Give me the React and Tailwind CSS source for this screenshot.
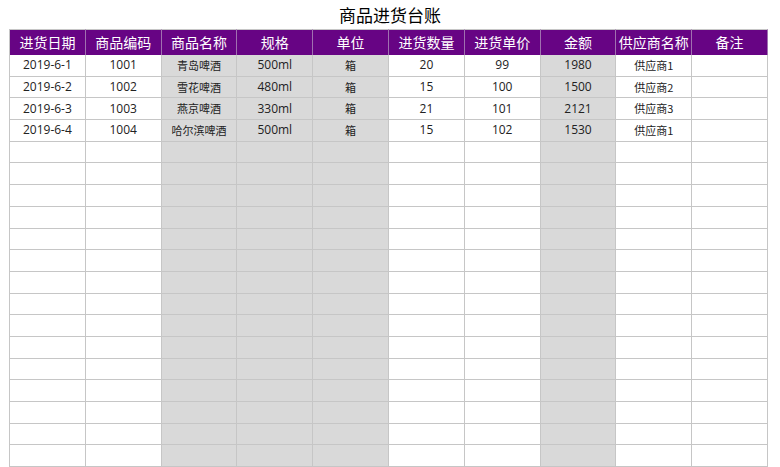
const headers=["进货日期","商品编码","商品名称","规格","单位","进货数量","进货单价","金额","供应商名称","备注"];
const data=[
["2019-6-1","1001","青岛啤酒","500ml","箱","20","99","1980","供应商1",""],
["2019-6-2","1002","雪花啤酒","480ml","箱","15","100","1500","供应商2",""],
["2019-6-3","1003","燕京啤酒","330ml","箱","21","101","2121","供应商3",""],
["2019-6-4","1004","哈尔滨啤酒","500ml","箱","15","102","1530","供应商1",""],
];
while(data.length<19)data.push(Array(10).fill(""));
const grey=[2,3,4,7];
const cjk=[2,4,8];
export default function App(){
  return <div className="w-[780px] h-[467px] bg-white overflow-hidden" style={{fontFamily:'"Noto Sans CJK SC","Liberation Sans",sans-serif'}}>
    <div className="h-[29px] flex items-center justify-center text-[17px] text-black pt-[1px]">商品进货台账</div>
    <div className="ml-[9px] w-[759px] grid grid-cols-10 border-l border-[#c6c6c6]">
      {headers.map((h,i)=><div key={i} className="h-[26px] bg-[#670484] text-white text-[14px] flex items-center justify-center border-r border-[#a070b0] border-t border-t-[#c6c6c6]">{h}</div>)}
      {data.map((r,ri)=>r.map((c,ci)=><div key={ri+"-"+ci} className={`h-[21.7px] flex items-center justify-center border-r border-b border-[#c6c6c6] text-[#222] ${grey.includes(ci)?"bg-[#d9d9d9]":"bg-white"} ${cjk.includes(ci)?"text-[11px]":"text-[12.5px]"}`} style={cjk.includes(ci)?undefined:{fontFamily:'"Open Sans","Liberation Sans",sans-serif',fontSize:'12px'}}>{c}</div>))}
    </div>
  </div>;
}
